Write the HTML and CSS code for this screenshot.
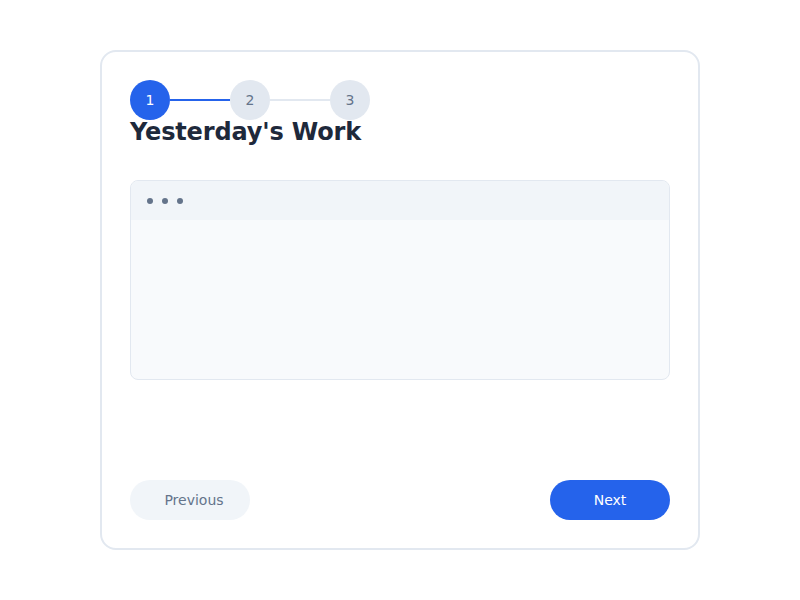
FILE: index.html
```html
<!DOCTYPE html>
<html>
<head>
<meta charset="utf-8">
<link rel="stylesheet" href="styles.css">
</head>
<body>
<div class="card">
  <div class="steps">
    <div class="step active">1</div>
    <div class="line active"></div>
    <div class="step">2</div>
    <div class="line"></div>
    <div class="step">3</div>
  </div>
  <h2 class="title">Yesterday's Work</h2>
  <div class="box">
    <div class="box-head">
      <span class="dot"></span><span class="dot"></span><span class="dot"></span>
    </div>
    <div class="box-body"></div>
  </div>
  <div class="actions">
    <button class="btn prev">Previous</button>
    <button class="btn next">Next</button>
  </div>
</div>
</body>
</html>
```
FILE: styles.css
```css
* { box-sizing: border-box; }
html, body { margin: 0; padding: 0; background: #ffffff; }
body {
  font-family: "DejaVu Sans", sans-serif;
  width: 800px;
  height: 600px;
  padding-top: 50px;
}
.card {
  width: 600px;
  height: 500px;
  margin: 0 auto;
  border: 2px solid #e2e8f0;
  border-radius: 16px;
  padding: 28px;
  display: flex;
  flex-direction: column;
}
.steps {
  display: flex;
  align-items: center;
  height: 40px;
}
.step {
  width: 40px;
  height: 40px;
  border-radius: 50%;
  background: #e2e8f0;
  color: #64748b;
  font-size: 14px;
  display: flex;
  align-items: center;
  justify-content: center;
  flex: none;
}
.step.active { background: #2563eb; color: #ffffff; }
.line {
  width: 60px;
  height: 2px;
  background: #e2e8f0;
}
.line.active { background: #2563eb; }
.title {
  margin: 0 0 36px 0;
  font-size: 24px;
  line-height: 24px;
  font-weight: bold;
  letter-spacing: -0.15px;
  color: #1e293b;
}
.box {
  height: 200px;
  border: 1px solid #e2e8f0;
  border-radius: 8px;
  background: #f8fafc;
  overflow: hidden;
  display: flex;
  flex-direction: column;
}
.box-head {
  height: 39px;
  background: #f1f5f9;
  display: flex;
  align-items: center;
  gap: 9px;
  padding-left: 16px;
}
.dot {
  width: 6px;
  height: 6px;
  border-radius: 50%;
  background: #64748b;
}
.box-body { flex: 1; }
.actions {
  margin-top: auto;
  display: flex;
  justify-content: space-between;
}
.btn {
  width: 120px;
  height: 40px;
  border: none;
  border-radius: 20px;
  font-family: "DejaVu Sans", sans-serif;
  font-size: 14px;
  padding: 0;
}
.btn.prev { background: #f1f5f9; color: #64748b; padding-left: 8px; }
.btn.next { background: #2563eb; color: #ffffff; }
```
